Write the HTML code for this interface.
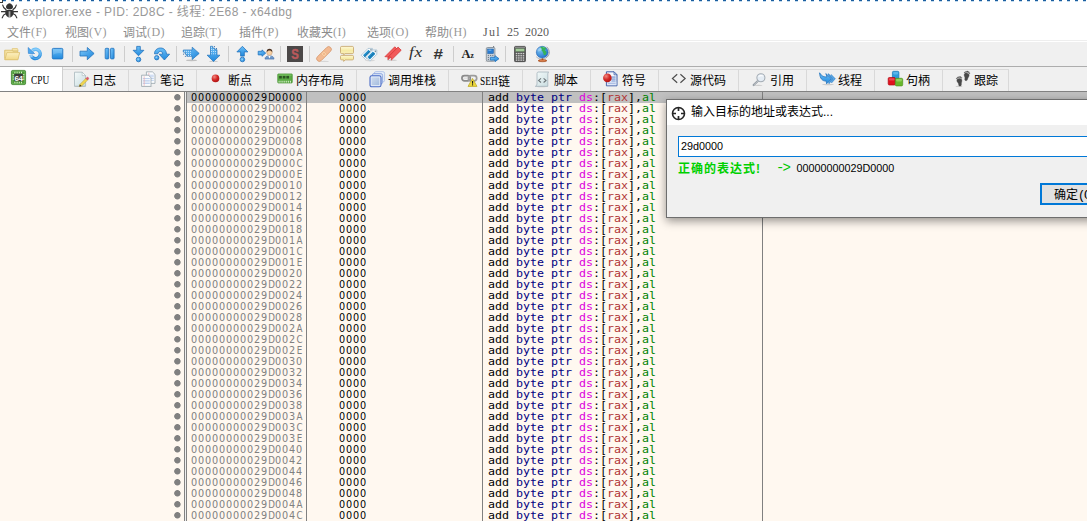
<!DOCTYPE html>
<html lang="zh-CN">
<head>
<meta charset="utf-8">
<title>explorer.exe - PID: 2D8C - 线程: 2E68 - x64dbg</title>
<style>
*{box-sizing:border-box;margin:0;padding:0}
html,body{width:1087px;height:521px;overflow:hidden;background:#fff}
body{position:relative;font-family:"Liberation Sans","Noto Sans CJK SC",sans-serif;font-size:12px;color:#000}
b,i{font-weight:normal;font-style:normal}
.abs{position:absolute}
#dash{left:0;top:0;width:1087px;height:1px;background:repeating-linear-gradient(90deg,#fff 0,#fff 2.8px,#1b5e9f 2.8px,#1b5e9f 6.4px,#fff 6.4px,#fff 8px)}
#dash2{left:0;top:1px;width:1087px;height:1px;opacity:.3;background:repeating-linear-gradient(90deg,#fff 0,#fff 2.8px,#3a8ac8 2.8px,#3a8ac8 6.4px,#fff 6.4px,#fff 8px)}
#title{left:0;top:2px;width:1087px;height:22px;background:#fff}
#title .t{position:absolute;left:22px;top:2px;font-size:12px;letter-spacing:.4px;line-height:16px;color:#999;white-space:nowrap;font-family:"Liberation Sans","Noto Sans CJK SC",sans-serif}
#menu{left:0;top:24px;width:1087px;height:18px;background:linear-gradient(#fff 0,#fff 16px,#eee 16px,#eee 17px,#fff 17px);white-space:nowrap}
#menu span{position:absolute;top:1px;line-height:16px;font-size:12px;color:#8c8c8c;font-family:"Liberation Mono","Noto Sans CJK SC",sans-serif}
#tool{left:0;top:42px;width:1087px;height:25px;background:#f0f0f0;border-bottom:1px solid #adadad}
#tabs{left:0;top:67px;width:1087px;height:25px;background:#f0f0f0}
#main{left:0;top:92px;width:1087px;height:429px;background:#fff8f0;overflow:hidden}
.r{position:relative;height:11px;line-height:11px;font-family:"DejaVu Sans Mono","Liberation Mono",monospace;font-size:10px;white-space:pre}
.r span{position:absolute;top:0;height:11px;transform-origin:0 0;transform:scaleX(1.1628)}
.r .ad,.r .by{font-family:"DejaVu Sans","Liberation Sans",sans-serif;transform:none;font-size:9.7px;letter-spacing:.829px;top:.2px}
.r u{text-decoration:none;display:inline-block;width:7px;text-align:center;letter-spacing:0;transform:scaleX(.9)}
.r.sel:before{content:"";position:absolute;left:187px;top:0;width:900px;height:11px;background:#c0c0c0}
.bp{position:absolute;left:174px;top:2px;width:8px;height:8px;background:radial-gradient(circle at 3.4px 3.3px,#808080 2.8px,rgba(128,128,128,0) 3.6px)}
.ad{left:191px;color:#808080}
.sel .ad{color:#000}
.by{left:339px;color:#000}
.di{left:487.5px;color:#000}
.k{color:#000080}.s{color:#dc00dc}.rg{color:#b03434}.g{color:#008300}.br{color:#000;}
#v1{left:184px;top:0;width:2px;height:429px;background:linear-gradient(90deg,#828282 0,#828282 50%,#f0f0f0 50%)}
#v1b{left:186px;top:0;width:1px;height:429px;background:#828282}
#v2{left:306px;top:0;width:1px;height:429px;background:#808080}
#v3{left:482px;top:0;width:1px;height:429px;background:#808080}
#v4{left:762px;top:0;width:1px;height:429px;background:#808080}
#dlg{left:666px;top:99px;width:440px;height:119px;background:#f0f0f0;border:1px solid #6e6e6e;box-shadow:0 3px 9px rgba(0,0,0,.42)}
#dlg .tb{position:absolute;left:0;top:0;width:100%;height:25px;background:#fff}
#dlg .tt{position:absolute;left:24px;top:4px;font-size:12px;line-height:16px;font-family:"Liberation Sans","Noto Sans CJK SC",sans-serif;color:#000;white-space:nowrap}
#dlg .ic{position:absolute;left:3.5px;top:5.5px}
#dlg .in{position:absolute;left:11px;top:36px;width:440px;height:21px;background:#fff;border:1px solid #0078d7;font-family:"Liberation Sans",sans-serif;font-size:10.8px;line-height:19px;padding-left:2px}
#dlg .ok{position:absolute;left:373px;top:83px;width:80px;height:22px;background:#e1e1e1;border:2px solid #0078d7;font-family:"Liberation Mono","Noto Sans CJK SC",sans-serif;font-size:12px;line-height:20px;padding-left:12px;padding-top:1px;white-space:nowrap}
#dlg .ok b{letter-spacing:-1.2px}
#dlg .m1{position:absolute;left:11px;top:61px;line-height:16px;font-size:12px;letter-spacing:1px;white-space:pre;font-weight:bold;color:#00d000;font-family:"Liberation Sans","Noto Sans CJK SC",sans-serif}
#dlg .m2{position:absolute;left:109px;top:60px;line-height:16px;font-size:14px;letter-spacing:-2px;white-space:pre;font-weight:normal;color:#00c800;font-family:"Liberation Mono",monospace}
#dlg .m3{position:absolute;left:129.5px;top:60px;line-height:16px;font-size:10.8px;white-space:pre;color:#000;font-family:"Liberation Sans",sans-serif}

.ti{position:absolute;top:4px;overflow:visible}
.tsep{position:absolute;top:4px;width:1px;height:16px;background:#cdcdcd}
.tab{position:absolute;top:2px;height:22px;border-top:1px solid #d9d9d9;border-right:1px solid #d9d9d9;border-left:1px solid #d9d9d9;background:#f0f0f0}
.tab.act{top:0;height:24px;background:#fff;border:0;border-right:1px solid #d0d0d0;z-index:2}
.tbi{position:absolute;top:1px;overflow:visible}
.tab.act .tbi{top:3px}
.tl{position:absolute;top:4px;line-height:16px;font-size:12px;white-space:nowrap;color:#000;font-family:"Liberation Mono","Noto Sans CJK SC",sans-serif}
.tab.act .tl{top:6px}
.tl .la{font-size:12px;position:relative;top:-1.5px;display:inline-block;width:18px;white-space:nowrap;transform-origin:0 50%;transform:scaleX(.78);font-family:"Liberation Serif",serif}
#menu span b{position:relative;top:-1px;font-size:12px;letter-spacing:.4px;color:#999;font-family:"Liberation Serif",serif}
#menu span.dt{top:0;color:#5c5c5c;font-family:"Liberation Serif",serif;font-size:12px;word-spacing:3px}
#menu span.dt b{top:0;color:#5c5c5c;letter-spacing:1.33px}
#tabline{left:0;top:91px;width:1087px;height:1px;background:#828282}
#bug{left:1px;top:3px}
</style>
</head>
<body>
<div id="title" class="abs"><span class="t">explorer.exe - PID: 2D8C - 线程: 2E68 - x64dbg</span></div>
<svg id="bug" class="abs" width="17" height="16" viewBox="0 0 17 16"><g fill="none" stroke="#333" stroke-width="1.2" stroke-linecap="round"><path d="M5 6.6C3 5.6 2 4 1.7 2"/><path d="M12 6.6C14 5.6 15 4 15.3 2"/><path d="M.4 8.7H16.6"/><path d="M4.8 10.8C3 11.4 1.8 12.8 1.2 14.8"/><path d="M12.2 10.8C14 11.4 15.2 12.8 15.8 14.8"/></g><path d="M8.5 .2C10.6 .8 12 2.4 12 4C12 5.4 10.8 6.3 8.5 6.3C6.2 6.3 5 5.4 5 4C5 2.4 6.4 .8 8.5 .2Z" fill="#333"/><path d="M4.5 7.2Q8.5 6.4 12.5 7.2C13.2 9.6 12.4 13 9.8 14.2H7.2C4.6 13 3.8 9.6 4.5 7.2Z" fill="#333"/><rect x="7.6" y="8.3" width="1.8" height="6" fill="#a8a8a8"/></svg>
<div id="dash" class="abs"></div><div id="dash2" class="abs"></div><i class="abs" style="left:0;top:0;width:3px;height:3px;border-right:1px solid #3a3a3a;border-bottom:1px solid #3a3a3a;background:#fff"></i>
<div id="menu" class="abs">
<span style="left:7px">文件<b>(F)</b></span><span style="left:65px">视图<b>(V)</b></span><span style="left:123px">调试<b>(D)</b></span><span style="left:181px">追踪<b>(T)</b></span><span style="left:239px">插件<b>(P)</b></span><span style="left:297px">收藏夹<b>(I)</b></span><span style="left:367px">选项<b>(O)</b></span><span style="left:425px">帮助<b>(H)</b></span><span class="dt" style="left:483px"><b>Jul</b> 25 2020</span>
</div>

<svg width="0" height="0" style="position:absolute">
<defs>
<linearGradient id="gb" x1="0" y1="0" x2="0" y2="1"><stop offset="0" stop-color="#6cc0f8"/><stop offset="1" stop-color="#2088dc"/></linearGradient>
<linearGradient id="gb2" x1="0" y1="0" x2="1" y2="1"><stop offset="0" stop-color="#7cc8fa"/><stop offset="1" stop-color="#1c84da"/></linearGradient>
<linearGradient id="gy" x1="0" y1="0" x2="0" y2="1"><stop offset="0" stop-color="#fcf0c0"/><stop offset="1" stop-color="#f2d886"/></linearGradient>
<linearGradient id="gc" x1="0" y1="0" x2="0" y2="1"><stop offset="0" stop-color="#fef9d8"/><stop offset=".5" stop-color="#f6eaa4"/><stop offset="1" stop-color="#fbf3c4"/></linearGradient>
<radialGradient id="gr" cx=".35" cy=".3" r=".8"><stop offset="0" stop-color="#f08a80"/><stop offset=".5" stop-color="#d42a28"/><stop offset="1" stop-color="#a81010"/></radialGradient>
<radialGradient id="gg" cx=".35" cy=".3" r=".8"><stop offset="0" stop-color="#7cc4f4"/><stop offset="1" stop-color="#1a6cc8"/></radialGradient>
<linearGradient id="gp" x1="0" y1="0" x2="1" y2="1"><stop offset="0" stop-color="#f4fafa"/><stop offset="1" stop-color="#c8dce0"/></linearGradient>
<linearGradient id="gs" x1="0" y1="0" x2="1" y2="1"><stop offset="0" stop-color="#cfdcee"/><stop offset="1" stop-color="#a4bcde"/></linearGradient>
</defs></svg>
<div id="tool" class="abs">
<svg class="ti" style="left:4px" width="16" height="16" viewBox="0 0 16 16"><path d="M.8 6.2V17.6H13.6V7.6H8.6L7.6 6.2Z" transform="scale(1 .66) translate(0 0.6)" fill="#f6e3a4" stroke="#dcc070" stroke-width=".8"/>
<path d="M8.2 2.6h5.2l.6 1.4v1H8.6z" fill="#f8e8b0" stroke="#dcc070" stroke-width=".7"/>
<path d="M.8 4.2H8l.8 1h5v8.4H.8Z" fill="#f6e3a4" stroke="#dcc070" stroke-width=".8" stroke-linejoin="round"/>
<path d="M2.9 6.6H15.7L13.9 13.7H.9Z" fill="url(#gy)" stroke="#dcc070" stroke-width=".8" stroke-linejoin="round"/></svg>
<svg class="ti" style="left:27px" width="16" height="16" viewBox="0 0 16 16"><path d="M3.96 8.7A4.7 4.7 0 1 0 5.28 4.58" fill="none" stroke="url(#gb)" stroke-width="3.4"/>
<path d="M3.96 8.7A4.7 4.7 0 1 0 5.28 4.58" fill="none" stroke="#fff" stroke-width="1.4" opacity=".22"/>
<path d="M3.96 8.7A4.7 4.7 0 0 0 5 11" fill="none" stroke="#cfe8fb" stroke-width="3.4" opacity=".55"/>
<path d="M1.15 1.5L1.4 7.4L7.6 7.6Z" fill="#4fa9ef" stroke="#2a7ccc" stroke-width=".6" stroke-linejoin="round"/></svg>
<svg class="ti" style="left:50px" width="16" height="16" viewBox="0 0 16 16"><rect x="2.3" y="2.4" width="10.5" height="10.5" rx="1" fill="url(#gb)" stroke="#2276c4" stroke-width=".9"/>
<path d="M3 3.2h9v4.2q-4.5 -1.2 -9 1.4z" fill="#fff" opacity=".16"/></svg>
<i class="tsep" style="left:72px"></i>
<svg class="ti" style="left:79px" width="16" height="16" viewBox="0 0 16 16"><path d="M1 5.2H8.3V1.5L15.1 7.5L8.3 13.7V10H1Z" fill="url(#gb2)" stroke="#2272bc" stroke-width=".8" stroke-linejoin="round"/></svg>
<svg class="ti" style="left:102px" width="16" height="16" viewBox="0 0 16 16"><rect x="3.2" y="2.3" width="3.6" height="10.6" rx=".8" fill="url(#gb2)" stroke="#2272bc" stroke-width=".8" stroke-linejoin="round"/><rect x="8.5" y="2.3" width="3.6" height="10.6" rx=".8" fill="url(#gb2)" stroke="#2272bc" stroke-width=".8" stroke-linejoin="round"/></svg>
<i class="tsep" style="left:124px"></i>
<svg class="ti" style="left:131px" width="16" height="16" viewBox="0 0 16 16"><path d="M5.7 .4H9.3V4.3H12.9L7.5 9.8L2.1 4.3H5.7Z" fill="url(#gb)" stroke="#2272bc" stroke-width=".8" stroke-linejoin="round"/><circle cx="7.5" cy="13.5" r="2.3" fill="url(#gb2)" stroke="#2272bc" stroke-width=".8" stroke-linejoin="round"/><circle cx="7.3" cy="13.4" r=".9" fill="#8cd0fa"/></svg>
<svg class="ti" style="left:154px" width="16" height="16" viewBox="0 0 16 16"><path d="M.5 7.8C.5 4.2 3.2 2 6.6 2C10 2 12.4 4.6 12.5 8.2H15.6L10.4 14L5.2 8.2H8.7C8.6 6.4 7.8 5.4 6.5 5.4C5.2 5.4 4.1 6.4 3.9 7.8Z" fill="url(#gb)" stroke="#2272bc" stroke-width=".8" stroke-linejoin="round"/><circle cx="2.7" cy="11.7" r="2.2" fill="url(#gb2)" stroke="#2272bc" stroke-width=".8" stroke-linejoin="round"/><circle cx="2.5" cy="11.5" r=".8" fill="#8cd0fa"/></svg>
<i class="tsep" style="left:176px"></i>
<svg class="ti" style="left:183px" width="16" height="16" viewBox="0 0 16 16"><ellipse cx="8.5" cy="14.3" rx="5.5" ry=".9" fill="#000" opacity=".2"/><path d="M.3 4H9.2V1.2L16.2 7.4L9.2 13.5V10.2H3.8V8.2H2.2V6.1H.3Z" fill="url(#gb2)" stroke="#2272bc" stroke-width=".7"/><rect x="1.05" y="4.85" width=".9" height=".9" fill="#e4f4ff"/><rect x="3.05" y="4.85" width=".9" height=".9" fill="#e4f4ff"/><rect x="5.05" y="4.85" width=".9" height=".9" fill="#e4f4ff"/><rect x="7" y="4.85" width=".9" height=".9" fill="#e4f4ff"/><rect x="3.05" y="6.95" width=".9" height=".9" fill="#e4f4ff"/><rect x="5.05" y="6.95" width=".9" height=".9" fill="#e4f4ff"/><rect x="7" y="6.95" width=".9" height=".9" fill="#e4f4ff"/><rect x="5.05" y="9.05" width=".9" height=".9" fill="#e4f4ff"/><rect x="7" y="9.05" width=".9" height=".9" fill="#e4f4ff"/><rect x="0" y="7.7" width=".9" height=".9" fill="#245c9c"/><rect x="1.9" y="9.9" width=".9" height=".9" fill="#245c9c"/></svg>
<svg class="ti" style="left:206px" width="16" height="16" viewBox="0 0 16 16"><ellipse cx="7.5" cy="15.4" rx="4.5" ry=".7" fill="#000" opacity=".15"/><path d="M4.5 .3H6.6V2.1H8.8V3.7H11V9.2H14L7.5 15.5L1.1 9.2H4.5Z" fill="url(#gb)" stroke="#2272bc" stroke-width=".7"/><rect x="5.1499999999999995" y="0.8500000000000001" width=".9" height=".9" fill="#e4f4ff"/><rect x="5.1499999999999995" y="2.9499999999999997" width=".9" height=".9" fill="#e4f4ff"/><rect x="7.1499999999999995" y="2.9499999999999997" width=".9" height=".9" fill="#e4f4ff"/><rect x="5.1499999999999995" y="5.1499999999999995" width=".9" height=".9" fill="#e4f4ff"/><rect x="7.1499999999999995" y="5.1499999999999995" width=".9" height=".9" fill="#e4f4ff"/><rect x="9.15" y="5.1499999999999995" width=".9" height=".9" fill="#e4f4ff"/><rect x="5.1499999999999995" y="7.35" width=".9" height=".9" fill="#e4f4ff"/><rect x="7.1499999999999995" y="7.35" width=".9" height=".9" fill="#e4f4ff"/><rect x="9.15" y="7.35" width=".9" height=".9" fill="#e4f4ff"/><rect x="7.9" y="0" width=".9" height=".9" fill="#245c9c"/><rect x="10" y="2" width=".9" height=".9" fill="#245c9c"/></svg>
<i class="tsep" style="left:228px"></i>
<svg class="ti" style="left:235px" width="16" height="16" viewBox="0 0 16 16"><path d="M7.4 .3L12.9 5.9H9.3V10.1H5.6V5.9H1.9Z" fill="url(#gb)" stroke="#2272bc" stroke-width=".8" stroke-linejoin="round"/><circle cx="7.4" cy="13.5" r="2.3" fill="url(#gb2)" stroke="#2272bc" stroke-width=".8" stroke-linejoin="round"/><circle cx="7.2" cy="13.4" r=".9" fill="#8cd0fa"/></svg>
<svg class="ti" style="left:258px" width="16" height="16" viewBox="0 0 16 16"><path d="M.2 5.3H4V3.9L7.7 7.1L4 10.3V8.9H.2Z" fill="url(#gb2)" stroke="#2272bc" stroke-width=".8" stroke-linejoin="round"/>
<path d="M7 13.1C7 10.8 8.6 9.9 11.5 9.9C14.4 9.9 16 10.8 16 13.1Z" fill="#6c98cc" stroke="#3c68a4" stroke-width=".6"/>
<path d="M10.4 9.9L11.5 12.6L12.6 9.9Z" fill="#fff"/>
<circle cx="11.5" cy="6.6" r="2.7" fill="#f6cfa4" stroke="#b88858" stroke-width=".4"/>
<path d="M8.7 6.4C8.3 3.6 10 2.7 11.5 2.7C13 2.7 14.7 3.6 14.3 6.4C13.6 5 12.7 4.6 11.5 4.6C10.3 4.6 9.4 5 8.7 6.4Z" fill="#4a3020"/></svg>
<i class="tsep" style="left:280px"></i>
<svg class="ti" style="left:287px" width="16" height="16" viewBox="0 0 16 16"><rect x="0" y="0" width="16" height="16" fill="#4b4848"/>
<text transform="translate(8 13.4) scale(.78 1)" text-anchor="middle" font-family="Liberation Sans,sans-serif" font-weight="bold" font-size="14.5" fill="#b9595c" stroke="#b9595c" stroke-width=".5">S</text></svg>
<i class="tsep" style="left:309px"></i>
<svg class="ti" style="left:316px" width="16" height="16" viewBox="0 0 16 16"><ellipse cx="8.5" cy="15.4" rx="4.5" ry=".6" fill="#000" opacity=".1"/><g transform="rotate(-45 8 8)"><rect x="-1.3" y="5.3" width="18.6" height="5.4" rx="2.7" fill="#f3ba92" stroke="#d69a70" stroke-width=".8"/><rect x="5.8" y="5.7" width="4.4" height="4.6" fill="#f9cfa6" stroke="#e6a87c" stroke-width=".5"/><rect x="7.2" y="7.2" width="1.6" height="1.6" fill="#f0b080"/></g></svg>
<svg class="ti" style="left:339px" width="16" height="16" viewBox="0 0 16 16"><g transform="translate(.7 0)"><path d="M2 .4H12.6Q13.8 .4 13.8 1.6V6.4Q13.8 7.6 12.6 7.6H5.3L4 8.9V7.6H2Q.8 7.6 .8 6.4V1.6Q.8 .4 2 .4Z" fill="url(#gc)" stroke="#c4a266" stroke-width=".8"/>
<path d="M2 9.4H12.6Q13.8 9.4 13.8 10.4V12.9Q13.8 13.9 12.6 13.9H5.3L4 15.4V13.9H2Q.8 13.9 .8 12.9V10.4Q.8 9.4 2 9.4Z" fill="url(#gc)" stroke="#c4a266" stroke-width=".8"/></g></svg>
<svg class="ti" style="left:362px" width="16" height="16" viewBox="0 0 16 16"><ellipse cx="8" cy="14.5" rx="5" ry=".7" fill="#000" opacity=".1"/><g transform="translate(5.9 6.9) rotate(-45) scale(1.18)"><path d="M-5.4 -2.6H2.8L5.4 0L2.8 2.6H-5.4Z" fill="#fff" stroke="#9cb8cc" stroke-width=".6" stroke-linejoin="round"/><rect x="-4.4" y="-1.5" width="6.6" height="3" fill="#2490cc"/><rect x="-4.4" y="-.1" width="6.6" height=".8" fill="#1670a8"/><circle cx="3.7" cy="0" r=".7" fill="#7890a0"/></g><g transform="translate(10.3 8.5) rotate(-45) scale(1.18)"><path d="M-5.4 -2.6H2.8L5.4 0L2.8 2.6H-5.4Z" fill="#fff" stroke="#9cb8cc" stroke-width=".6" stroke-linejoin="round"/><rect x="-4.4" y="-1.5" width="6.6" height="3" fill="#2490cc"/><rect x="-4.4" y="-.1" width="6.6" height=".8" fill="#1670a8"/><circle cx="3.7" cy="0" r=".7" fill="#7890a0"/></g></svg>
<svg class="ti" style="left:385px" width="16" height="16" viewBox="0 0 16 16"><ellipse cx="7" cy="14.3" rx="5" ry=".8" fill="#000" opacity=".13"/><g transform="translate(6.4 7.3) rotate(-45)"><path d="M-7 -2.2H7V2.2H-7L-5 0Z" fill="#f25a5a" stroke="#d23434" stroke-width=".7" stroke-linejoin="round"/></g><g transform="translate(9.7 7.6) rotate(-45)"><path d="M-7 -2.2H7V2.2H-7L-5 0Z" fill="#f25a5a" stroke="#d23434" stroke-width=".7" stroke-linejoin="round"/></g></svg>
<svg class="ti" style="left:408px" width="16" height="16" viewBox="0 0 16 16"><text transform="translate(.9 11.2) scale(1.16 1)" font-family="Liberation Serif,serif" font-style="italic" font-size="15" fill="#2c2c2c" letter-spacing=".6">fx</text></svg>
<svg class="ti" style="left:431px" width="16" height="16" viewBox="0 0 16 16"><text transform="translate(2.2 12.9) scale(1.22 1)" font-family="Liberation Sans,sans-serif" font-style="italic" font-weight="bold" font-size="14" fill="#343434">#</text></svg>
<i class="tsep" style="left:453px"></i>
<svg class="ti" style="left:460px" width="16" height="16" viewBox="0 0 16 16"><text x="1.6" y="12" font-family="Liberation Serif,serif" font-weight="bold" font-size="12.5" fill="#222">A</text><text x="10.4" y="12" font-family="Liberation Serif,serif" font-weight="bold" font-size="7.5" fill="#222">z</text></svg>
<svg class="ti" style="left:483px" width="16" height="16" viewBox="0 0 16 16"><ellipse cx="7" cy="15.3" rx="5" ry=".7" fill="#000" opacity=".15"/><rect x="10.2" y="0" width=".9" height="2.5" fill="#606870"/><rect x="3.3" y="1.5" width="8.6" height="13.6" rx="1.2" fill="#ccd4dc" stroke="#78848e" stroke-width=".8"/>
<rect x="4.7" y="3" width="5.8" height="4.6" fill="#2a7cd0" stroke="#1c5ca0" stroke-width=".5"/><rect x="5.4" y="3.7" width="3" height=".9" fill="#8cc0f0"/>
<g fill="#6c7884"><rect x="4.8" y="8.9" width="1.2" height="1"/><rect x="7" y="8.9" width="1.2" height="1"/><rect x="9.2" y="8.9" width="1.2" height="1"/><rect x="4.8" y="10.9" width="1.2" height="1"/><rect x="4.8" y="12.9" width="1.2" height="1"/></g>
<path d="M7.4 11.3H12V9.7L16 12.7L12 15.7V14.1H7.4Z" fill="url(#gb2)" stroke="#2272bc" stroke-width=".8" stroke-linejoin="round"/></svg>
<i class="tsep" style="left:505px"></i>
<svg class="ti" style="left:512px" width="16" height="16" viewBox="0 0 16 16"><ellipse cx="8" cy="15.7" rx="6.5" ry=".6" fill="#000" opacity=".18"/><rect x="2.6" y=".4" width="10.8" height="15.2" rx=".9" fill="#5a5a5a" stroke="#3c3c3c" stroke-width=".8"/><rect x="3" y=".8" width="10" height="1.3" fill="#8a8a8a"/><rect x="3.7" y="2.8" width="8.6" height="2.5" fill="#a4cc9a" stroke="#6e9468" stroke-width=".4"/><rect x="3.8" y="6.9" width="1.5" height="1.3" fill="#d4d4d4"/><rect x="3.8" y="9.100000000000001" width="1.5" height="1.3" fill="#d4d4d4"/><rect x="3.8" y="11.3" width="1.5" height="1.3" fill="#d4d4d4"/><rect x="3.8" y="13.5" width="1.5" height="1.3" fill="#d4d4d4"/><rect x="6.1" y="6.9" width="1.5" height="1.3" fill="#d4d4d4"/><rect x="6.1" y="9.100000000000001" width="1.5" height="1.3" fill="#d4d4d4"/><rect x="6.1" y="11.3" width="1.5" height="1.3" fill="#d4d4d4"/><rect x="6.1" y="13.5" width="1.5" height="1.3" fill="#d4d4d4"/><rect x="8.399999999999999" y="6.9" width="1.5" height="1.3" fill="#d4d4d4"/><rect x="8.399999999999999" y="9.100000000000001" width="1.5" height="1.3" fill="#d4d4d4"/><rect x="8.399999999999999" y="11.3" width="1.5" height="1.3" fill="#d4d4d4"/><rect x="8.399999999999999" y="13.5" width="1.5" height="1.3" fill="#d4d4d4"/><rect x="10.7" y="6.9" width="1.5" height="1.3" fill="#d4d4d4"/><rect x="10.7" y="9.100000000000001" width="1.5" height="1.3" fill="#d4d4d4"/><rect x="10.7" y="11.3" width="1.5" height="1.3" fill="#d4d4d4"/><rect x="10.7" y="13.5" width="1.5" height="1.3" fill="#d4d4d4"/></svg>
<svg class="ti" style="left:535px" width="16" height="16" viewBox="0 0 16 16"><path d="M11.6 .8C15.6 4.2 15 10 10.4 12.3" fill="none" stroke="#8c949c" stroke-width=".9"/><path d="M1.2 10.8C3.4 13.2 6.8 13.7 9.8 12.5" fill="none" stroke="#a4acb4" stroke-width=".8"/>
<circle cx="7.2" cy="6.2" r="5.9" fill="url(#gg)" stroke="#1c5cac" stroke-width=".5"/>
<path d="M5.6 1C7.4 .4 9.6 .8 10.8 1.9C11.6 3 11 3.6 10.2 3.4C9.4 3.8 9.8 4.8 10.8 5C11.6 5.6 11.8 7 11 8.2C10.2 9.4 9 9.6 8.6 8.4C8.6 7.2 7.8 6.8 7.6 5.6C6.8 5 6.2 4 6.8 3C6 2.4 5.2 1.8 5.6 1Z" fill="#35b25a"/>
<path d="M7.4 1.2C8.6 1 9.6 1.4 10.2 2C9.4 2.2 8.2 2 7.4 1.2Z" fill="#8ce0a0" opacity=".7"/>
<ellipse cx="4.6" cy="3.6" rx="2.4" ry="1.5" transform="rotate(-35 4.6 3.6)" fill="#fff" opacity=".28"/>
<ellipse cx="7.5" cy="14.7" rx="4.3" ry="1.1" fill="#c8642c" stroke="#96461c" stroke-width=".5"/><ellipse cx="7.5" cy="14.3" rx="3" ry=".5" fill="#e89468" opacity=".8"/><rect x="6.8" y="12.3" width="1.4" height="1.8" fill="#a8501e"/></svg>
</div>
<div id="tabs" class="abs">
<div class="tab act" style="left:0px;width:63px"><svg class="tbi" style="left:11px" width="17" height="17" viewBox="0 0 17 17"><rect x=".4" y=".4" width="14.2" height="14.2" rx="1.3" fill="#4c9a38" stroke="#3a7c2a" stroke-width=".8"/><rect x="1.2" y="1.2" width="12.6" height="12.6" rx=".8" fill="none" stroke="#7cc468" stroke-width=".6"/><rect x="3.4" y="1.7" width="1" height="1.7" fill="#d8f0c8"/><rect x="3.4" y="11.6" width="1" height="1.7" fill="#d8f0c8"/><rect x="5.6" y="1.7" width="1" height="1.7" fill="#d8f0c8"/><rect x="5.6" y="11.6" width="1" height="1.7" fill="#d8f0c8"/><rect x="7.800000000000001" y="1.7" width="1" height="1.7" fill="#d8f0c8"/><rect x="7.800000000000001" y="11.6" width="1" height="1.7" fill="#d8f0c8"/><rect x="10" y="1.7" width="1" height="1.7" fill="#d8f0c8"/><rect x="10" y="11.6" width="1" height="1.7" fill="#d8f0c8"/><rect x="1.6" y="4.2" width="1.7" height="1" fill="#d8f0c8"/><rect x="11.7" y="4.2" width="1.7" height="1" fill="#d8f0c8"/><rect x="1.6" y="6.4" width="1.7" height="1" fill="#d8f0c8"/><rect x="11.7" y="6.4" width="1.7" height="1" fill="#d8f0c8"/><rect x="1.6" y="8.600000000000001" width="1.7" height="1" fill="#d8f0c8"/><rect x="11.7" y="8.600000000000001" width="1.7" height="1" fill="#d8f0c8"/><rect x="3.3" y="3.7" width="8.5" height="7.6" rx=".6" fill="#3c3c3c"/><text x="7.4" y="10.5" text-anchor="middle" font-family="Liberation Sans,sans-serif" font-weight="bold" font-size="8" fill="#fff" letter-spacing="-.5">64</text></svg><span class="tl" style="left:31px"><b class="la">CPU</b></span></div>
<div class="tab" style="left:60px;width:69px"><svg class="tbi" style="left:12px" width="17" height="17" viewBox="0 0 17 17"><ellipse cx="7" cy="15.5" rx="6" ry=".6" fill="#000" opacity=".18"/><path d="M1.5 1.2H9.2L12.6 4.6V15.2H1.5Z" fill="url(#gp)" stroke="#a8b8bc" stroke-width=".8" stroke-linejoin="round"/><path d="M9.2 1.2V4.6H12.6Z" fill="#fff" stroke="#a8b8bc" stroke-width=".6" stroke-linejoin="round"/>
<path d="M6.3 15.6L6.9 13.4L12.9 7.4L14.6 9.1L8.6 15.1Z" fill="#f2d850" stroke="#b89820" stroke-width=".5" stroke-linejoin="round"/><path d="M12.9 7.4L13.9 6.4Q14.6 5.9 15.3 6.6Q16 7.3 15.5 8L14.6 9.1Z" fill="#e05868" stroke="#b83848" stroke-width=".4"/><path d="M6.3 15.6L6.9 13.4L8.6 15.1Z" fill="#3a3020"/></svg><span class="tl" style="left:31px">日志</span></div>
<div class="tab" style="left:128px;width:69px"><svg class="tbi" style="left:12px" width="17" height="17" viewBox="0 0 17 17"><ellipse cx="6" cy="15.6" rx="5.5" ry=".5" fill="#000" opacity=".15"/><path d="M5.4 0.8H11.4L14 3.4000000000000004V12.4H5.4Z" fill="#fafcfe" stroke="#98a4ac" stroke-width=".8" stroke-linejoin="round"/><rect x="6.6000000000000005" y="3.8" width="6.199999999999999" height=".7" fill="#a8c0e8"/><rect x="6.6000000000000005" y="5.5" width="6.199999999999999" height=".7" fill="#a8c0e8"/><rect x="6.6000000000000005" y="7.199999999999999" width="6.199999999999999" height=".7" fill="#a8c0e8"/><rect x="6.6000000000000005" y="8.899999999999999" width="6.199999999999999" height=".7" fill="#a8c0e8"/><rect x="7.6000000000000005" y="1.8" width=".6" height="10" fill="#f0a0a0"/><path d="M0.6 4.2H7.4L10 6.800000000000001V15.399999999999999H0.6Z" fill="#fafcfe" stroke="#98a4ac" stroke-width=".8" stroke-linejoin="round"/><rect x="1.7999999999999998" y="7.2" width="7" height=".7" fill="#a8c0e8"/><rect x="1.7999999999999998" y="8.9" width="7" height=".7" fill="#a8c0e8"/><rect x="1.7999999999999998" y="10.6" width="7" height=".7" fill="#a8c0e8"/><rect x="1.7999999999999998" y="12.3" width="7" height=".7" fill="#a8c0e8"/><rect x="2.8000000000000003" y="5.2" width=".6" height="9.6" fill="#f0a0a0"/></svg><span class="tl" style="left:31px">笔记</span></div>
<div class="tab" style="left:196px;width:69px"><svg class="tbi" style="left:12px" width="17" height="17" viewBox="0 0 17 17"><circle cx="6.5" cy="7.4" r="3.8" fill="url(#gr)"/></svg><span class="tl" style="left:31px">断点</span></div>
<div class="tab" style="left:264px;width:93px"><svg class="tbi" style="left:12px" width="17" height="17" viewBox="0 0 17 17"><rect x=".8" y="3" width="14.4" height="8.9" rx=".6" fill="#5cac46" stroke="#44902f" stroke-width=".8"/><rect x="1.4" y="3.6" width="13.2" height=".9" fill="#84cc70"/><rect x="2.2" y="4.9" width="2.6" height="2.6" fill="#2c5424"/><rect x="5.800000000000001" y="4.9" width="2.6" height="2.6" fill="#2c5424"/><rect x="9.4" y="4.9" width="2.6" height="2.6" fill="#2c5424"/><rect x="1.6" y="9.8" width="1" height="1.8" fill="#d4ecc8"/><rect x="3.5" y="9.8" width="1" height="1.8" fill="#d4ecc8"/><rect x="5.4" y="9.8" width="1" height="1.8" fill="#d4ecc8"/><rect x="7.299999999999999" y="9.8" width="1" height="1.8" fill="#d4ecc8"/><rect x="9.2" y="9.8" width="1" height="1.8" fill="#d4ecc8"/><rect x="11.1" y="9.8" width="1" height="1.8" fill="#d4ecc8"/><rect x="12.999999999999998" y="9.8" width="1" height="1.8" fill="#d4ecc8"/></svg><span class="tl" style="left:31px">内存布局</span></div>
<div class="tab" style="left:356px;width:93px"><svg class="tbi" style="left:12px" width="17" height="17" viewBox="0 0 17 17"><rect x="5.2" y=".6" width="10.4" height="10.4" rx="1.8" fill="#e4ecf8" stroke="#a8bce6" stroke-width=".8"/><rect x="3.2" y="2.6" width="10.4" height="10.4" rx="1.8" fill="#d8e2f4" stroke="#809cdc" stroke-width=".8"/><rect x="1" y="4.8" width="11" height="11" rx="1.8" fill="#dfe8f6" stroke="#4a6cc6" stroke-width="1.1"/><rect x="2.7" y="6.5" width="7.6" height="7.6" rx=".5" fill="url(#gs)"/></svg><span class="tl" style="left:31px">调用堆栈</span></div>
<div class="tab" style="left:448px;width:75px"><svg class="tbi" style="left:12px" width="17" height="17" viewBox="0 0 17 17"><rect x=".9" y="4.7" width="8.4" height="5.2" rx="2.6" fill="none" stroke="#8a8a8a" stroke-width="1.7"/><rect x="7.3" y="4.7" width="8.4" height="5.2" rx="2.6" fill="none" stroke="#9c9c9c" stroke-width="1.7"/><rect x="2.4" y="6.7" width="4.5" height="1" fill="#d8d8d8"/>
<path d="M11.5 7.4L16 15.4H7Z" fill="#ecd83c" stroke="#b8a41c" stroke-width=".7" stroke-linejoin="round"/><rect x="11" y="10" width="1.1" height="2.7" fill="#1c1c1c"/><rect x="11" y="13.3" width="1.1" height="1.1" fill="#1c1c1c"/></svg><span class="tl" style="left:31px"><b class="la">SEH</b>链</span></div>
<div class="tab" style="left:522px;width:69px"><svg class="tbi" style="left:12px" width="17" height="17" viewBox="0 0 17 17"><ellipse cx="6.5" cy="15.7" rx="6.5" ry=".6" fill="#000" opacity=".15"/><path d="M3 1H13.8Q12.8 1.6 12.8 3V15.3H.4Q2 14.6 2 13V2.4Q2 1.4 3 1Z" fill="url(#gp)" stroke="#a4b4bc" stroke-width=".8" stroke-linejoin="round"/><path d="M6 7.3L3.6 9.4L6 11.5M8.6 7.3L11 9.4L8.6 11.5" fill="none" stroke="#6c7478" stroke-width="1.1"/></svg><span class="tl" style="left:31px">脚本</span></div>
<div class="tab" style="left:590px;width:69px"><svg class="tbi" style="left:12px" width="17" height="17" viewBox="0 0 17 17"><path d="M3.4 .8H11L14 3.8V14.8H3.4Z" fill="#f2f6fc" stroke="#4060a8" stroke-width="1" stroke-linejoin="round"/><path d="M11 .8V3.8H14Z" fill="#c8d8f0" stroke="#4060a8" stroke-width=".7" stroke-linejoin="round"/><g fill="#4870c0"><rect x="8.4" y="5.6" width="4.2" height=".9"/><rect x="8.4" y="7.6" width="4.2" height=".9"/><rect x="8.4" y="9.6" width="4.2" height=".9"/><rect x="5" y="11.8" width="7.6" height=".9"/></g><path d="M3.9 10.5H13.5V14.3H3.9Z" fill="#d0dcf4" opacity=".6"/><circle cx="4.4" cy="6.9" r="4.3" fill="url(#gr)"/></svg><span class="tl" style="left:31px">符号</span></div>
<div class="tab" style="left:658px;width:81px"><svg class="tbi" style="left:12px" width="17" height="17" viewBox="0 0 17 17"><path d="M6.2 3.2L1.4 7.5L6.2 11.8M9.4 3.2L14.2 7.5L9.4 11.8" fill="none" stroke="#4c4c4c" stroke-width="1.15"/></svg><span class="tl" style="left:31px">源代码</span></div>
<div class="tab" style="left:738px;width:69px"><svg class="tbi" style="left:12px" width="17" height="17" viewBox="0 0 17 17"><g transform="translate(1.8 .9) scale(.92)"><ellipse cx="6" cy="14.6" rx="4.5" ry=".6" fill="#000" opacity=".15"/><path d="M6.6 8.9L.9 14.3" stroke="#9098a0" stroke-width="2.2" stroke-linecap="round"/><path d="M6.3 9.2L1.3 13.9" stroke="#d0d4d8" stroke-width=".8" stroke-linecap="round"/><circle cx="8.8" cy="6.3" r="4.4" fill="#e4ecf4" stroke="#a4acb4" stroke-width="1.1"/><path d="M5.8 5.6A3.2 3.2 0 0 1 11.6 5Q8.6 4 5.8 5.6Z" fill="#fff" opacity=".9"/></g></svg><span class="tl" style="left:31px">引用</span></div>
<div class="tab" style="left:806px;width:69px"><svg class="tbi" style="left:12px" width="17" height="17" viewBox="0 0 17 17"><ellipse cx="9" cy="13.6" rx="6" ry=".7" fill="#000" opacity=".15"/><path d="M.6 1.8C2.6 5.4 5.6 6.2 8 5.8L6.8 2.6L12.4 7.7L7.6 12.8L7.2 10C3.6 10.4 .8 7.6 .6 1.8Z" fill="url(#gb)" stroke="#2272bc" stroke-width=".8" stroke-linejoin="round"/><path d="M9.4 2.6L14.4 7.7L10 12.8L9.6 11.4L13 7.7L9.2 4Z" fill="#3c9cea" stroke="#2272bc" stroke-width=".5"/><path d="M12.2 3.4L16.4 7.7L12.6 12L12.4 10.8L15 7.7L12 4.6Z" fill="#4aa6ee" stroke="#2272bc" stroke-width=".4"/></svg><span class="tl" style="left:31px">线程</span></div>
<div class="tab" style="left:874px;width:69px"><svg class="tbi" style="left:12px" width="17" height="17" viewBox="0 0 17 17"><rect x="5.4" y=".3" width="6.5" height="7.2" rx="1.2" fill="#2c9cdc" stroke="#1c78b8" stroke-width=".7"/><rect x="6.2" y="1" width="4.9" height="2.4" rx=".8" fill="#6cc0f0" opacity=".7"/><rect x="1.2" y="6.5" width="7.2" height="7.5" rx="1.2" fill="#e0101c" stroke="#b00814" stroke-width=".7"/><rect x="2" y="7.2" width="5.6" height="2.4" rx=".8" fill="#f46068" opacity=".7"/><rect x="8.3" y="7.3" width="7.4" height="7.6" rx="1.2" fill="#68b82c" stroke="#4c941c" stroke-width=".7"/><rect x="9.1" y="8" width="5.8" height="2.4" rx=".8" fill="#a4dc70" opacity=".7"/></svg><span class="tl" style="left:31px">句柄</span></div>
<div class="tab" style="left:942px;width:67px"><svg class="tbi" style="left:12px" width="17" height="17" viewBox="0 0 17 17"><ellipse cx="4" cy="15.3" rx="3.5" ry=".5" fill="#000" opacity=".2"/><g transform="translate(9 0.1) rotate(8 2.5 5)" fill="#484848" stroke="#484848" stroke-width=".3"><path d="M0 4.3C-.2 2.6 1 2 2.6 2C4.3 2 5.3 2.9 5 4.6C4.8 5.8 4.2 6.4 4.1 7.4C4 8.8 3.5 9.6 2.5 9.6C1.4 9.6 1 8.8 1.2 7.6C1.4 6.2 .2 5.6 0 4.3Z"/><circle cx=".3" cy="1.7" r=".5"/><circle cx="1.5" cy=".8" r=".6"/><circle cx="2.8" cy=".5" r=".6"/><circle cx="4.1" cy=".8" r=".55"/><circle cx="5.1" cy="1.7" r=".45"/></g><g transform="translate(2 5.5) rotate(-8 2.5 5)" fill="#484848" stroke="#484848" stroke-width=".3"><path d="M0 4.3C-.2 2.6 1 2 2.6 2C4.3 2 5.3 2.9 5 4.6C4.8 5.8 4.2 6.4 4.1 7.4C4 8.8 3.5 9.6 2.5 9.6C1.4 9.6 1 8.8 1.2 7.6C1.4 6.2 .2 5.6 0 4.3Z"/><circle cx=".3" cy="1.7" r=".5"/><circle cx="1.5" cy=".8" r=".6"/><circle cx="2.8" cy=".5" r=".6"/><circle cx="4.1" cy=".8" r=".55"/><circle cx="5.1" cy="1.7" r=".45"/></g></svg><span class="tl" style="left:31px">跟踪</span></div>
</div><div id="tabline" class="abs"></div>
<div id="main" class="abs">
<div class="r sel"><i class="bp"></i><span class="ad">00000000029<u>D</u>0000</span><span class="by">0000</span><span class="di"><b class="m">add</b> <b class="k">byte ptr</b> <b class="s">ds</b>:<b class="br">[</b><b class="rg">rax</b><b class="br">]</b>,<b class="g">al</b></span></div>
<div class="r"><i class="bp"></i><span class="ad">00000000029<u>D</u>0002</span><span class="by">0000</span><span class="di"><b class="m">add</b> <b class="k">byte ptr</b> <b class="s">ds</b>:<b class="br">[</b><b class="rg">rax</b><b class="br">]</b>,<b class="g">al</b></span></div>
<div class="r"><i class="bp"></i><span class="ad">00000000029<u>D</u>0004</span><span class="by">0000</span><span class="di"><b class="m">add</b> <b class="k">byte ptr</b> <b class="s">ds</b>:<b class="br">[</b><b class="rg">rax</b><b class="br">]</b>,<b class="g">al</b></span></div>
<div class="r"><i class="bp"></i><span class="ad">00000000029<u>D</u>0006</span><span class="by">0000</span><span class="di"><b class="m">add</b> <b class="k">byte ptr</b> <b class="s">ds</b>:<b class="br">[</b><b class="rg">rax</b><b class="br">]</b>,<b class="g">al</b></span></div>
<div class="r"><i class="bp"></i><span class="ad">00000000029<u>D</u>0008</span><span class="by">0000</span><span class="di"><b class="m">add</b> <b class="k">byte ptr</b> <b class="s">ds</b>:<b class="br">[</b><b class="rg">rax</b><b class="br">]</b>,<b class="g">al</b></span></div>
<div class="r"><i class="bp"></i><span class="ad">00000000029<u>D</u>000<u>A</u></span><span class="by">0000</span><span class="di"><b class="m">add</b> <b class="k">byte ptr</b> <b class="s">ds</b>:<b class="br">[</b><b class="rg">rax</b><b class="br">]</b>,<b class="g">al</b></span></div>
<div class="r"><i class="bp"></i><span class="ad">00000000029<u>D</u>000<u>C</u></span><span class="by">0000</span><span class="di"><b class="m">add</b> <b class="k">byte ptr</b> <b class="s">ds</b>:<b class="br">[</b><b class="rg">rax</b><b class="br">]</b>,<b class="g">al</b></span></div>
<div class="r"><i class="bp"></i><span class="ad">00000000029<u>D</u>000<u>E</u></span><span class="by">0000</span><span class="di"><b class="m">add</b> <b class="k">byte ptr</b> <b class="s">ds</b>:<b class="br">[</b><b class="rg">rax</b><b class="br">]</b>,<b class="g">al</b></span></div>
<div class="r"><i class="bp"></i><span class="ad">00000000029<u>D</u>0010</span><span class="by">0000</span><span class="di"><b class="m">add</b> <b class="k">byte ptr</b> <b class="s">ds</b>:<b class="br">[</b><b class="rg">rax</b><b class="br">]</b>,<b class="g">al</b></span></div>
<div class="r"><i class="bp"></i><span class="ad">00000000029<u>D</u>0012</span><span class="by">0000</span><span class="di"><b class="m">add</b> <b class="k">byte ptr</b> <b class="s">ds</b>:<b class="br">[</b><b class="rg">rax</b><b class="br">]</b>,<b class="g">al</b></span></div>
<div class="r"><i class="bp"></i><span class="ad">00000000029<u>D</u>0014</span><span class="by">0000</span><span class="di"><b class="m">add</b> <b class="k">byte ptr</b> <b class="s">ds</b>:<b class="br">[</b><b class="rg">rax</b><b class="br">]</b>,<b class="g">al</b></span></div>
<div class="r"><i class="bp"></i><span class="ad">00000000029<u>D</u>0016</span><span class="by">0000</span><span class="di"><b class="m">add</b> <b class="k">byte ptr</b> <b class="s">ds</b>:<b class="br">[</b><b class="rg">rax</b><b class="br">]</b>,<b class="g">al</b></span></div>
<div class="r"><i class="bp"></i><span class="ad">00000000029<u>D</u>0018</span><span class="by">0000</span><span class="di"><b class="m">add</b> <b class="k">byte ptr</b> <b class="s">ds</b>:<b class="br">[</b><b class="rg">rax</b><b class="br">]</b>,<b class="g">al</b></span></div>
<div class="r"><i class="bp"></i><span class="ad">00000000029<u>D</u>001<u>A</u></span><span class="by">0000</span><span class="di"><b class="m">add</b> <b class="k">byte ptr</b> <b class="s">ds</b>:<b class="br">[</b><b class="rg">rax</b><b class="br">]</b>,<b class="g">al</b></span></div>
<div class="r"><i class="bp"></i><span class="ad">00000000029<u>D</u>001<u>C</u></span><span class="by">0000</span><span class="di"><b class="m">add</b> <b class="k">byte ptr</b> <b class="s">ds</b>:<b class="br">[</b><b class="rg">rax</b><b class="br">]</b>,<b class="g">al</b></span></div>
<div class="r"><i class="bp"></i><span class="ad">00000000029<u>D</u>001<u>E</u></span><span class="by">0000</span><span class="di"><b class="m">add</b> <b class="k">byte ptr</b> <b class="s">ds</b>:<b class="br">[</b><b class="rg">rax</b><b class="br">]</b>,<b class="g">al</b></span></div>
<div class="r"><i class="bp"></i><span class="ad">00000000029<u>D</u>0020</span><span class="by">0000</span><span class="di"><b class="m">add</b> <b class="k">byte ptr</b> <b class="s">ds</b>:<b class="br">[</b><b class="rg">rax</b><b class="br">]</b>,<b class="g">al</b></span></div>
<div class="r"><i class="bp"></i><span class="ad">00000000029<u>D</u>0022</span><span class="by">0000</span><span class="di"><b class="m">add</b> <b class="k">byte ptr</b> <b class="s">ds</b>:<b class="br">[</b><b class="rg">rax</b><b class="br">]</b>,<b class="g">al</b></span></div>
<div class="r"><i class="bp"></i><span class="ad">00000000029<u>D</u>0024</span><span class="by">0000</span><span class="di"><b class="m">add</b> <b class="k">byte ptr</b> <b class="s">ds</b>:<b class="br">[</b><b class="rg">rax</b><b class="br">]</b>,<b class="g">al</b></span></div>
<div class="r"><i class="bp"></i><span class="ad">00000000029<u>D</u>0026</span><span class="by">0000</span><span class="di"><b class="m">add</b> <b class="k">byte ptr</b> <b class="s">ds</b>:<b class="br">[</b><b class="rg">rax</b><b class="br">]</b>,<b class="g">al</b></span></div>
<div class="r"><i class="bp"></i><span class="ad">00000000029<u>D</u>0028</span><span class="by">0000</span><span class="di"><b class="m">add</b> <b class="k">byte ptr</b> <b class="s">ds</b>:<b class="br">[</b><b class="rg">rax</b><b class="br">]</b>,<b class="g">al</b></span></div>
<div class="r"><i class="bp"></i><span class="ad">00000000029<u>D</u>002<u>A</u></span><span class="by">0000</span><span class="di"><b class="m">add</b> <b class="k">byte ptr</b> <b class="s">ds</b>:<b class="br">[</b><b class="rg">rax</b><b class="br">]</b>,<b class="g">al</b></span></div>
<div class="r"><i class="bp"></i><span class="ad">00000000029<u>D</u>002<u>C</u></span><span class="by">0000</span><span class="di"><b class="m">add</b> <b class="k">byte ptr</b> <b class="s">ds</b>:<b class="br">[</b><b class="rg">rax</b><b class="br">]</b>,<b class="g">al</b></span></div>
<div class="r"><i class="bp"></i><span class="ad">00000000029<u>D</u>002<u>E</u></span><span class="by">0000</span><span class="di"><b class="m">add</b> <b class="k">byte ptr</b> <b class="s">ds</b>:<b class="br">[</b><b class="rg">rax</b><b class="br">]</b>,<b class="g">al</b></span></div>
<div class="r"><i class="bp"></i><span class="ad">00000000029<u>D</u>0030</span><span class="by">0000</span><span class="di"><b class="m">add</b> <b class="k">byte ptr</b> <b class="s">ds</b>:<b class="br">[</b><b class="rg">rax</b><b class="br">]</b>,<b class="g">al</b></span></div>
<div class="r"><i class="bp"></i><span class="ad">00000000029<u>D</u>0032</span><span class="by">0000</span><span class="di"><b class="m">add</b> <b class="k">byte ptr</b> <b class="s">ds</b>:<b class="br">[</b><b class="rg">rax</b><b class="br">]</b>,<b class="g">al</b></span></div>
<div class="r"><i class="bp"></i><span class="ad">00000000029<u>D</u>0034</span><span class="by">0000</span><span class="di"><b class="m">add</b> <b class="k">byte ptr</b> <b class="s">ds</b>:<b class="br">[</b><b class="rg">rax</b><b class="br">]</b>,<b class="g">al</b></span></div>
<div class="r"><i class="bp"></i><span class="ad">00000000029<u>D</u>0036</span><span class="by">0000</span><span class="di"><b class="m">add</b> <b class="k">byte ptr</b> <b class="s">ds</b>:<b class="br">[</b><b class="rg">rax</b><b class="br">]</b>,<b class="g">al</b></span></div>
<div class="r"><i class="bp"></i><span class="ad">00000000029<u>D</u>0038</span><span class="by">0000</span><span class="di"><b class="m">add</b> <b class="k">byte ptr</b> <b class="s">ds</b>:<b class="br">[</b><b class="rg">rax</b><b class="br">]</b>,<b class="g">al</b></span></div>
<div class="r"><i class="bp"></i><span class="ad">00000000029<u>D</u>003<u>A</u></span><span class="by">0000</span><span class="di"><b class="m">add</b> <b class="k">byte ptr</b> <b class="s">ds</b>:<b class="br">[</b><b class="rg">rax</b><b class="br">]</b>,<b class="g">al</b></span></div>
<div class="r"><i class="bp"></i><span class="ad">00000000029<u>D</u>003<u>C</u></span><span class="by">0000</span><span class="di"><b class="m">add</b> <b class="k">byte ptr</b> <b class="s">ds</b>:<b class="br">[</b><b class="rg">rax</b><b class="br">]</b>,<b class="g">al</b></span></div>
<div class="r"><i class="bp"></i><span class="ad">00000000029<u>D</u>003<u>E</u></span><span class="by">0000</span><span class="di"><b class="m">add</b> <b class="k">byte ptr</b> <b class="s">ds</b>:<b class="br">[</b><b class="rg">rax</b><b class="br">]</b>,<b class="g">al</b></span></div>
<div class="r"><i class="bp"></i><span class="ad">00000000029<u>D</u>0040</span><span class="by">0000</span><span class="di"><b class="m">add</b> <b class="k">byte ptr</b> <b class="s">ds</b>:<b class="br">[</b><b class="rg">rax</b><b class="br">]</b>,<b class="g">al</b></span></div>
<div class="r"><i class="bp"></i><span class="ad">00000000029<u>D</u>0042</span><span class="by">0000</span><span class="di"><b class="m">add</b> <b class="k">byte ptr</b> <b class="s">ds</b>:<b class="br">[</b><b class="rg">rax</b><b class="br">]</b>,<b class="g">al</b></span></div>
<div class="r"><i class="bp"></i><span class="ad">00000000029<u>D</u>0044</span><span class="by">0000</span><span class="di"><b class="m">add</b> <b class="k">byte ptr</b> <b class="s">ds</b>:<b class="br">[</b><b class="rg">rax</b><b class="br">]</b>,<b class="g">al</b></span></div>
<div class="r"><i class="bp"></i><span class="ad">00000000029<u>D</u>0046</span><span class="by">0000</span><span class="di"><b class="m">add</b> <b class="k">byte ptr</b> <b class="s">ds</b>:<b class="br">[</b><b class="rg">rax</b><b class="br">]</b>,<b class="g">al</b></span></div>
<div class="r"><i class="bp"></i><span class="ad">00000000029<u>D</u>0048</span><span class="by">0000</span><span class="di"><b class="m">add</b> <b class="k">byte ptr</b> <b class="s">ds</b>:<b class="br">[</b><b class="rg">rax</b><b class="br">]</b>,<b class="g">al</b></span></div>
<div class="r"><i class="bp"></i><span class="ad">00000000029<u>D</u>004<u>A</u></span><span class="by">0000</span><span class="di"><b class="m">add</b> <b class="k">byte ptr</b> <b class="s">ds</b>:<b class="br">[</b><b class="rg">rax</b><b class="br">]</b>,<b class="g">al</b></span></div>
<div class="r"><i class="bp"></i><span class="ad">00000000029<u>D</u>004<u>C</u></span><span class="by">0000</span><span class="di"><b class="m">add</b> <b class="k">byte ptr</b> <b class="s">ds</b>:<b class="br">[</b><b class="rg">rax</b><b class="br">]</b>,<b class="g">al</b></span></div>
<div class="r"><i class="bp"></i><span class="ad">00000000029<u>D</u>004<u>E</u></span><span class="by">0000</span><span class="di"><b class="m">add</b> <b class="k">byte ptr</b> <b class="s">ds</b>:<b class="br">[</b><b class="rg">rax</b><b class="br">]</b>,<b class="g">al</b></span></div>
<div id="v1" class="abs"></div><div id="v1b" class="abs"></div><div id="v2" class="abs"></div><div id="v3" class="abs"></div><div id="v4" class="abs"></div>
</div>
<div id="dlg" class="abs">
<div class="tb"></div>
<svg class="ic" width="15" height="15" viewBox="0 0 15 15"><circle cx="7.5" cy="7.5" r="6" fill="none" stroke="#262626" stroke-width="1.6"/><path d="M7.5 1V5M7.5 10V14M1 7.5H5M10 7.5H14" stroke="#262626" stroke-width="1.7"/></svg>
<span class="tt">输入目标的地址或表达式...</span>
<div class="in">29d0000</div>
<span class="m1">正确的表达式!</span><span class="m2">-&gt;</span><span class="m3">00000000029D0000</span>
<div class="ok">确定<b>(O)</b></div>
</div>
</body>
</html>
